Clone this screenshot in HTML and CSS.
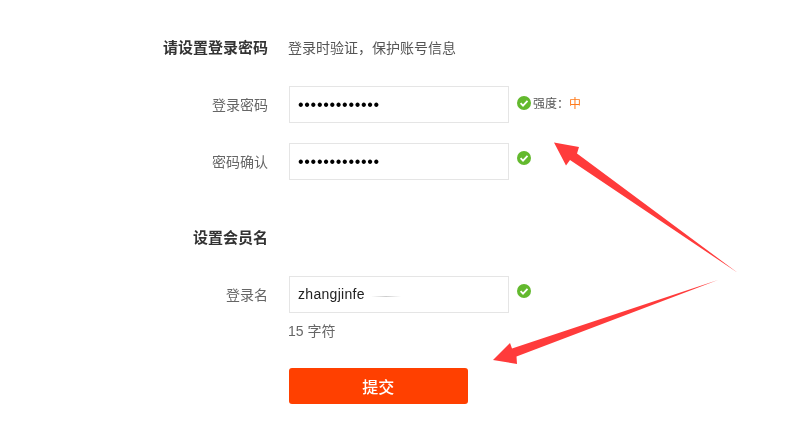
FILE: index.html
```html
<!DOCTYPE html>
<html lang="zh-CN">
<head>
<meta charset="utf-8">
<title>设置登录密码</title>
<link rel="stylesheet" href="styles.css">
</head>
<body>
<form class="form">
  <section class="section section-password">
    <div class="row heading-row">
      <h2 class="heading">请设置登录密码</h2>
      <p class="hint">登录时验证，保护账号信息</p>
    </div>
    <div class="row field-row">
      <label class="label" for="pw">登录密码</label>
      <input class="input secret" id="pw" type="password" value="aaaaaaaaaaaaa">
      <div class="status">
        <svg class="ok" viewBox="0 0 14 14"><circle cx="7" cy="7" r="7"/><path d="M3.6 7.2 6 9.6 10.5 4.9"/></svg>
        <span class="strength">强度：<em class="level">中</em></span>
      </div>
    </div>
    <div class="row field-row">
      <label class="label" for="pw2">密码确认</label>
      <input class="input secret" id="pw2" type="password" value="aaaaaaaaaaaaa">
      <div class="status">
        <svg class="ok" viewBox="0 0 14 14"><circle cx="7" cy="7" r="7"/><path d="M3.6 7.2 6 9.6 10.5 4.9"/></svg>
      </div>
    </div>
  </section>
  <section class="section section-member">
    <div class="row heading-row">
      <h2 class="heading">设置会员名</h2>
    </div>
    <div class="row field-row">
      <label class="label" for="name">登录名</label>
      <div class="input-wrap">
        <input class="input name" id="name" type="text" value="zhangjinfe">
        <span class="smudge"></span>
      </div>
      <div class="status">
        <svg class="ok" viewBox="0 0 14 14"><circle cx="7" cy="7" r="7"/><path d="M3.6 7.2 6 9.6 10.5 4.9"/></svg>
      </div>
    </div>
    <div class="row count-row">
      <span></span>
      <p class="count">15 字符</p>
    </div>
    <div class="row submit-row">
      <span></span>
      <button class="submit" type="button">提交</button>
    </div>
  </section>
</form>
<svg class="arrows" viewBox="0 0 800 427">
  <polygon points="554,142.5 579,147 577,153.5 738,273 570,160 566,165.5"/>
  <polygon points="493,360 510,343 512,348.5 718,280 516.5,356.5 517,364"/>
</svg>
</body>
</html>
```

FILE: styles.css
```css
html, body {
  margin: 0;
  padding: 0;
  background: #fff;
}
body {
  position: relative;
  width: 800px;
  height: 427px;
  overflow: hidden;
  font-family: "Liberation Sans", "Noto Sans CJK SC", sans-serif;
  color: #666;
}
.form {
  display: flex;
  flex-direction: column;
  padding-top: 30px;
  filter: blur(0.3px);
}
.section {
  display: flex;
  flex-direction: column;
}
.section-password {
  gap: 20px;
}
.section-member {
  margin-top: 40px;
}
.row {
  display: grid;
  grid-template-columns: 268px 220px auto;
  column-gap: 21px;
  align-items: center;
}
.heading-row {
  box-sizing: border-box;
  height: 36px;
  padding-bottom: 3px;
}
.heading {
  margin: 0;
  font-size: 15px;
  font-weight: 700;
  color: #333;
  text-align: right;
  white-space: nowrap;
}
.hint {
  grid-column: 2 / 4;
  margin: 0 0 0 -1px;
  font-size: 14px;
  color: #555;
}
.label {
  padding-bottom: 2px;
  font-size: 14px;
  color: #666;
  text-align: right;
}
.input-wrap {
  position: relative;
  display: flex;
}
.input {
  box-sizing: border-box;
  width: 220px;
  height: 37px;
  margin: 0;
  padding: 0 8px;
  border: 1px solid #e5e5e5;
  border-radius: 0;
  outline: none;
  background: #fff;
  font-family: "Liberation Sans", sans-serif;
  font-size: 14px;
  color: #222;
}
.name {
  padding-bottom: 2px;
  letter-spacing: 0.3px;
}
.secret {
  font-size: 16px;
  letter-spacing: 0.7px;
  color: #000;
}
.smudge {
  position: absolute;
  left: 82px;
  top: 20px;
  width: 30px;
  height: 1px;
  background: linear-gradient(90deg, #fff, #ccc 50%, #fff);
  box-shadow: 0 0 0 6px #fff;
}
.status {
  display: flex;
  align-items: center;
  align-self: start;
  gap: 2px;
  margin-left: -13px;
  margin-top: 8px;
}
.ok {
  display: block;
  width: 14px;
  height: 14px;
  flex: none;
}
.ok circle {
  fill: #63b92e;
}
.ok path {
  fill: none;
  stroke: #fff;
  stroke-width: 1.8;
}
.strength {
  font-size: 12px;
  color: #555;
}
.level {
  font-style: normal;
  color: #ff7a1a;
}
.section-member .field-row {
  margin-top: 20px;
}
.count-row {
  margin-top: 8px;
}
.count {
  margin: 0 0 0 -1px;
  font-size: 14px;
  line-height: 20px;
  color: #666;
}
.submit-row {
  margin-top: 27px;
}
.submit {
  box-sizing: border-box;
  width: 178.5px;
  height: 36px;
  padding: 0 0 1px;
  border: 0;
  border-radius: 3px;
  background: #ff4000;
  color: #fff;
  font-family: "Noto Sans CJK SC", sans-serif;
  font-size: 16px;
  font-weight: 500;
}
.arrows {
  position: absolute;
  left: 0;
  top: 0;
  width: 800px;
  height: 427px;
  pointer-events: none;
}
.arrows polygon {
  fill: #ff3b3b;
}
```
